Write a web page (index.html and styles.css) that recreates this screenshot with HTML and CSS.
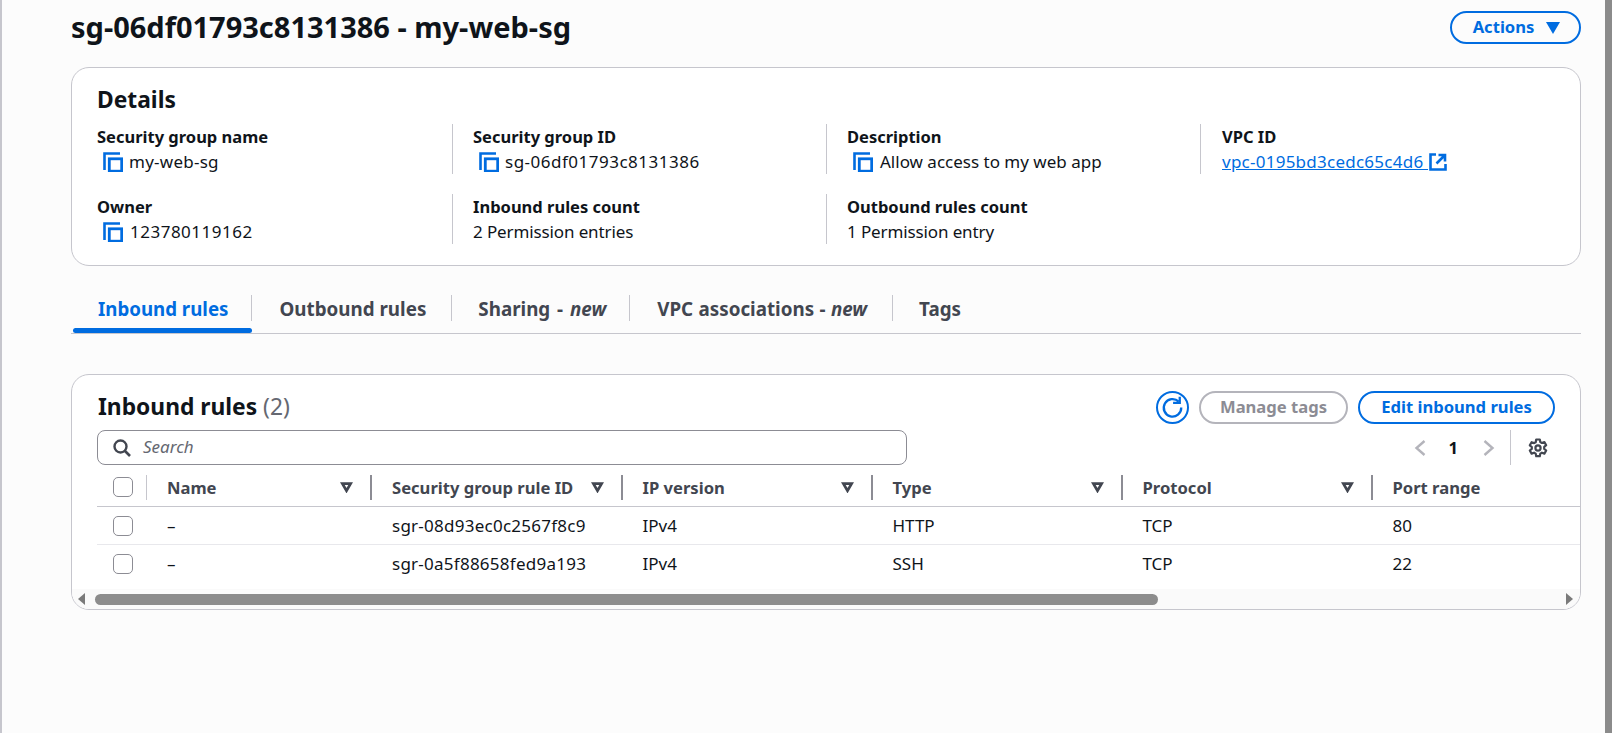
FILE: index.html
```html
<!DOCTYPE html>
<html lang="en">
<head>
<meta charset="utf-8">
<title>sg-06df01793c8131386 - my-web-sg</title>
<link rel="stylesheet" href="styles.css">
</head>
<body>
<svg class="sprite" width="0" height="0" aria-hidden="true">
  <symbol id="copy" viewBox="0 0 20 20">
    <path d="M1.500 18V1.500H17" fill="none" stroke="currentColor" stroke-width="2.600"/>
    <rect x="6.300" y="6.800" width="12.400" height="12.400" fill="none" stroke="currentColor" stroke-width="2.800"/>
  </symbol>
  <symbol id="sort" viewBox="0 0 14 12">
    <path d="M2.500 1.800h9L7 9.500z" fill="none" stroke="currentColor" stroke-width="3" stroke-linejoin="miter"/>
  </symbol>
</svg>
<div class="page">
  <main class="main">
    <header class="head">
      <h1 class="title">sg-06df01793c8131386 - my-web-sg</h1>
      <button class="btn btn-actions">Actions <span class="caret"></span></button>
    </header>

    <section class="card details">
      <h2 class="details-title">Details</h2>
      <div class="kv-grid">
        <div class="kv">
          <div class="kv-label">Security group name</div>
          <div class="kv-value ls-small"><svg class="copy"><use href="#copy"/></svg>my-web-sg</div>
        </div>
        <div class="kv">
          <div class="kv-label">Security group ID</div>
          <div class="kv-value ls-num"><svg class="copy"><use href="#copy"/></svg>sg-06df01793c8131386</div>
        </div>
        <div class="kv">
          <div class="kv-label">Description</div>
          <div class="kv-value gap-wide"><svg class="copy"><use href="#copy"/></svg>Allow access to my web app</div>
        </div>
        <div class="kv kv-vpc">
          <div class="kv-label">VPC ID</div>
          <div class="kv-value ls-small"><a class="link" href="#">vpc-0195bd3cedc65c4d6 <svg class="ext" viewBox="0 0 18 18"><path d="M7 1.500H1.500v15h15V11" fill="none" stroke="currentColor" stroke-width="2.600"/><path d="M7.500 10.500l7.500-7.500M9.500 2H16v6.500" fill="none" stroke="currentColor" stroke-width="2.600"/></svg></a></div>
        </div>
        <div class="kv">
          <div class="kv-label">Owner</div>
          <div class="kv-value ls-num gap-wide"><svg class="copy"><use href="#copy"/></svg>123780119162</div>
        </div>
        <div class="kv">
          <div class="kv-label">Inbound rules count</div>
          <div class="kv-value plain">2 Permission entries</div>
        </div>
        <div class="kv">
          <div class="kv-label">Outbound rules count</div>
          <div class="kv-value plain">1 Permission entry</div>
        </div>
      </div>
    </section>

    <nav class="tabs">
      <a class="tab active">Inbound rules</a>
      <a class="tab tab-outbound">Outbound rules</a>
      <a class="tab tab-sharing">Sharing - <em>new</em></a>
      <a class="tab tab-vpc">VPC associations - <em>new</em></a>
      <a class="tab last">Tags</a>
    </nav>

    <section class="card rules">
      <div class="rules-top">
        <h2 class="rules-title">Inbound rules <span class="count">(2)</span></h2>
        <div class="rules-actions">
          <button class="btn btn-icon"><svg viewBox="0 0 20 20" width="23" height="23"><path d="M15.400 4.900A7.600 7.600 0 1 0 17.600 10" fill="none" stroke="currentColor" stroke-width="2"/><path d="M10.500 6h5.800V.6" fill="none" stroke="currentColor" stroke-width="2"/></svg></button>
          <button class="btn btn-disabled">Manage tags</button>
          <button class="btn btn-edit">Edit inbound rules</button>
        </div>
      </div>
      <div class="filter-row">
        <div class="search">
          <svg class="search-icon" viewBox="0 0 18 18" width="18" height="18"><circle cx="7.500" cy="7.500" r="6" fill="none" stroke="currentColor" stroke-width="2.400"/><path d="M12 12l5 5" fill="none" stroke="currentColor" stroke-width="2.600"/></svg>
          <span class="search-text">Search</span>
        </div>
        <div class="pager">
          <svg class="chev" viewBox="0 0 12 16" width="12" height="16"><path d="M10.500 1L2.500 8l8 7" fill="none" stroke="currentColor" stroke-width="2.400"/></svg>
          <span class="page-num">1</span>
          <svg class="chev" viewBox="0 0 12 16" width="12" height="16"><path d="M1.500 1l8 7-8 7" fill="none" stroke="currentColor" stroke-width="2.400"/></svg>
          <span class="pager-sep"></span>
          <svg class="gear" viewBox="0 0 20 20" width="20" height="20"><path d="M8.200 1.500h3.600l.5 2.600 1.600.9 2.500-.9 1.800 3.100-2 1.700v1.900l2 1.700-1.800 3.100-2.500-.9-1.600.9-.5 2.600H8.200l-.5-2.600-1.600-.9-2.500.9-1.800-3.100 2-1.700V9L1.800 7.300l1.800-3.100 2.500.9 1.600-.9z" fill="none" stroke="currentColor" stroke-width="2.200" stroke-linejoin="round"/><circle cx="10" cy="10" r="2.600" fill="none" stroke="currentColor" stroke-width="2.200"/></svg>
        </div>
      </div>
      <div class="table">
        <div class="row row-head">
          <div class="cell cell-check"><span class="check"></span><i class="sep sep-light"></i></div>
          <div class="cell">Name<svg class="sort"><use href="#sort"/></svg><i class="sep"></i></div>
          <div class="cell">Security group rule ID<svg class="sort"><use href="#sort"/></svg><i class="sep"></i></div>
          <div class="cell">IP version<svg class="sort"><use href="#sort"/></svg><i class="sep"></i></div>
          <div class="cell">Type<svg class="sort"><use href="#sort"/></svg><i class="sep"></i></div>
          <div class="cell">Protocol<svg class="sort"><use href="#sort"/></svg><i class="sep"></i></div>
          <div class="cell">Port range</div>
        </div>
        <div class="row row-body">
          <div class="cell cell-check"><span class="check"></span></div>
          <div class="cell">–</div>
          <div class="cell ls-small">sgr-08d93ec0c2567f8c9</div>
          <div class="cell">IPv4</div>
          <div class="cell">HTTP</div>
          <div class="cell">TCP</div>
          <div class="cell">80</div>
        </div>
        <div class="row row-body row-last">
          <div class="cell cell-check"><span class="check"></span></div>
          <div class="cell">–</div>
          <div class="cell ls-small">sgr-0a5f88658fed9a193</div>
          <div class="cell">IPv4</div>
          <div class="cell">SSH</div>
          <div class="cell">TCP</div>
          <div class="cell">22</div>
        </div>
      </div>
      <div class="hscroll">
        <span class="arrow arrow-left"></span>
        <div class="hscroll-track"><div class="thumb"></div></div>
        <span class="arrow arrow-right"></span>
      </div>
    </section>
  </main>
  <div class="vscroll"></div>
</div>
</body>
</html>
```

FILE: styles.css
```css
* { box-sizing: border-box; }
html, body { margin: 0; height: 100%; }
body {
  font-family: "Noto Sans", "Liberation Sans", sans-serif;
  font-size: 17px;
  color: #0f141a;
  background: #fcfcfc;
  overflow: hidden;
}
.sprite { position: absolute; }
.page {
  display: flex;
  height: 733px;
  border-left: 2px solid #c6c6cd;
}
.main {
  flex: 1;
  padding: 11px 24px 0 69px;
  min-width: 0;
}
.vscroll { width: 7px; background: #8b8b8b; }

.head {
  display: flex;
  justify-content: space-between;
  align-items: center;
  height: 33px;
  margin-bottom: 23px;
}
.title { margin: 0; padding-bottom: 2px; font-size: 29px; line-height: 36px; font-weight: 700; }

.btn {
  font: inherit;
  font-size: 16.600px;
  font-weight: 700;
  background: #fff;
  border: 2px solid #006ce0;
  color: #006ce0;
  border-radius: 20px;
  height: 33px;
  padding: 0 0 2px;
  display: inline-flex;
  align-items: center;
  justify-content: center;
}
.btn-actions { width: 131px; background: transparent; gap: 12px; padding-left: 2px; }
.caret {
  width: 0; height: 0;
  margin-top: 2px;
  border-left: 7px solid transparent;
  border-right: 7px solid transparent;
  border-top: 12px solid #006ce0;
}

.card {
  background: #fff;
  border: 1px solid #c6c6cd;
  border-radius: 18px;
}
.details { height: 199px; padding: 17px 25px 0; }
.details-title { margin: 0 0 10px; font-size: 22.800px; line-height: 29px; font-weight: 700; }
.kv-grid {
  display: grid;
  grid-template-columns: 355px 374px 374px 1fr;
  row-gap: 20px;
}
.kv { height: 50px; padding-left: 20px; border-left: 1px solid #c6c6cd; }
.kv:nth-child(4n+1) { padding-left: 0; border-left: 0; }
.kv-vpc { padding-left: 21px; }
.kv-label { font-size: 16.500px; font-weight: 700; line-height: 25px; }
.kv-value { display: flex; align-items: center; line-height: 24px; margin-top: 1px; padding-left: 6px; gap: 6px; }
.kv-value.plain { padding-left: 0; letter-spacing: -.12px; }
.kv-vpc .kv-value { padding-left: 0; }
.gap-wide { gap: 7px; }
.ls-small { letter-spacing: .25px; }
.ls-num { letter-spacing: .5px; }
.copy { width: 20px; height: 20px; color: #006ce0; flex: none; }
.link { color: #006ce0; text-decoration: underline; display: inline-flex; align-items: center; white-space: pre; }
.ext { width: 18px; height: 18px; margin-left: 1px; }

.tabs {
  display: flex;
  height: 68px;
  padding: 18px 0 0 2px;
  border-bottom: 1px solid #c6c6cd;
  margin-bottom: 40px;
}
.tab {
  position: relative;
  height: 49px;
  font-size: 18.800px;
  font-weight: 700;
  color: #424650;
  display: flex;
  align-items: center;
  padding: 0 26px;
  white-space: pre;
}
.tab::after {
  content: "";
  position: absolute;
  right: 0;
  top: 11px;
  height: 26px;
  width: 1px;
  background: #c6c6cd;
}
.tab.last::after { display: none; }
.tab em { font-weight: 700; }
.tab.active { color: #006ce0; font-size: 18.700px; padding: 0 24px 0 25px; }
.tab-outbound { padding: 0 26px 0 27px; }
.tab-sharing { padding: 0 24px 0 26px; word-spacing: 2px; }
.tab-vpc { padding: 0 26px 0 27px; word-spacing: .5px; }
.tab.last { padding-left: 26px; }
.tab.active::before {
  content: "";
  position: absolute;
  left: 0;
  right: 0;
  bottom: 0;
  height: 5px;
  border-radius: 3px;
  background: #006ce0;
}

.rules { height: 236px; padding-top: 16px; overflow: hidden; }
.rules-top {
  display: flex;
  justify-content: space-between;
  align-items: center;
  height: 33px;
  padding: 0 25px 0 26px;
}
.rules-title { margin: 0; padding-bottom: 2px; font-size: 22.800px; line-height: 31px; font-weight: 700; }
.count { font-weight: 400; color: #656871; }
.rules-actions { display: flex; gap: 10px; align-items: center; }
.btn-icon { width: 33px; border-radius: 50%; padding: 0; }
.btn-disabled { width: 149px; color: #8c8c94; border-color: #b4b4bb; }
.btn-edit { width: 197px; }

.filter-row {
  display: flex;
  justify-content: space-between;
  align-items: center;
  margin-top: 6px;
  padding: 0 32px 0 25px;
  height: 35px;
}
.search {
  width: 810px;
  height: 35px;
  border: 1px solid #8c8c94;
  border-radius: 8px;
  display: flex;
  align-items: center;
  padding-left: 15px;
  gap: 12px;
  color: #424650;
}
.search-text { font-style: italic; color: #656871; padding-bottom: 2px; }
.pager { display: flex; align-items: center; height: 35px; color: #b4b4bb; }
.page-num { font-size: 16.600px; font-weight: 700; color: #0f141a; margin: 0 25px 0 23px; }
.pager-sep { width: 1px; height: 35px; background: #c6c6cd; margin: 0 17px 0 15px; }
.gear { color: #424650; }

.table { margin-top: 3px; }
.row {
  display: grid;
  grid-template-columns: 70px 225px 250.500px 250px 250px 250px 1fr;
  margin-left: 25px;
  align-items: center;
  color: #0f141a;
}
.row-head { height: 39px; border-bottom: 1px solid #c6c6cd; font-size: 16.600px; font-weight: 700; color: #424650; }
.row-body { height: 38px; border-bottom: 1px solid #e8e8ec; }
.row-last { border-bottom-color: transparent; }
.cell { position: relative; height: 100%; display: flex; align-items: center; white-space: nowrap; }
.cell-check { padding-left: 16px; }
.check {
  width: 20px; height: 20px;
  border: 1px solid #8c8c94;
  border-radius: 5px;
  background: #fff;
}
.sort { position: absolute; right: 39px; width: 13px; height: 11px; color: #424650; }
.sep { position: absolute; right: 20px; top: 7px; height: 25px; width: 2px; background: #8c8c94; }
.sep-light { width: 1px; background: #c6c6cd; right: 20px; }

.hscroll {
  display: flex;
  align-items: center;
  height: 20px;
  background: #fafafa;
  margin-top: 6px;
}
.hscroll-track { flex: 1; padding-left: 10px; }
.thumb { width: 1063px; height: 11px; border-radius: 6px; background: #8c8c8c; }
.arrow { width: 0; height: 0; border-top: 6px solid transparent; border-bottom: 6px solid transparent; }
.arrow-left { border-right: 7px solid #7a7a7a; margin-left: 6px; }
.arrow-right { border-left: 7px solid #7a7a7a; margin-right: 7px; }
```
